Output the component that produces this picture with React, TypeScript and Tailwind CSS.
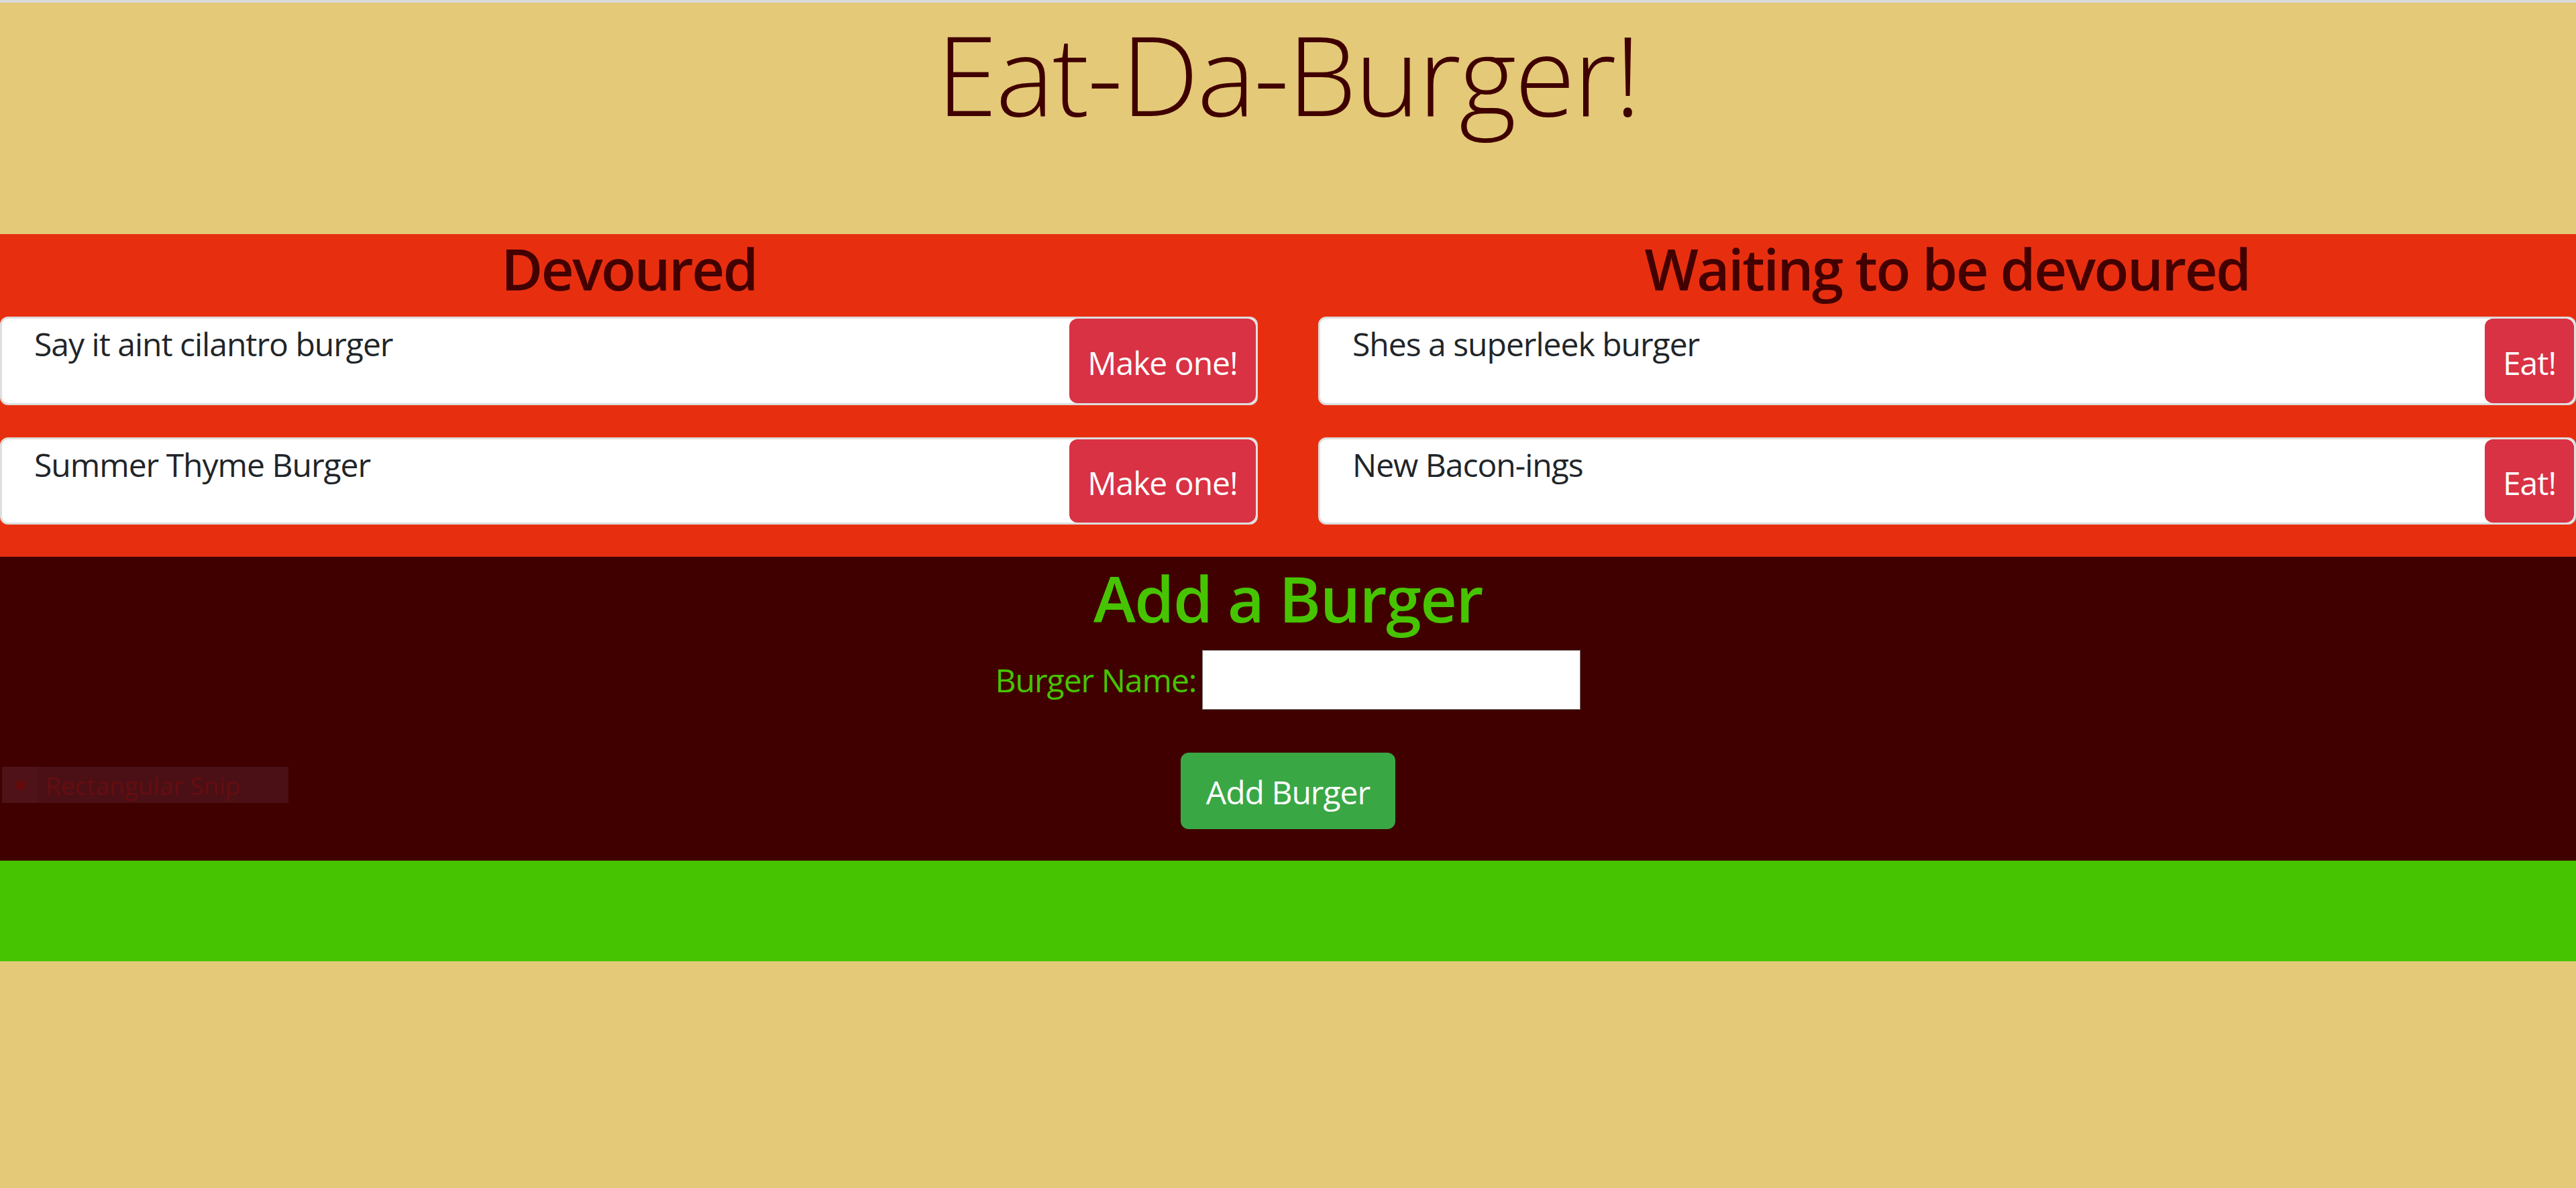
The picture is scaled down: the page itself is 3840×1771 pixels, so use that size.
import { useState } from "react"

interface Burger {
    id: number
    name: string
}

const devoured: Burger[] = [
    { id: 1, name: "Say it aint cilantro burger" },
    { id: 2, name: "Summer Thyme Burger" },
]

const waiting: Burger[] = [
    { id: 3, name: "Shes a superleek burger" },
    { id: 4, name: "New Bacon-ings" },
]

const BurgerCard = ({ name, label, btnWidth }: { name: string, label: string, btnWidth: string }) => (
    <div className="flex h-[132px] overflow-hidden rounded-[12px] border-[3px] border-[#dedede] bg-white last:h-[130px]">
        <p className="flex-1 pl-[48px] pt-[2px] text-[48px] leading-[1.5] tracking-[-1px] text-[#212529]">{name}</p>
        <button className={`${btnWidth} h-full cursor-pointer rounded-[12px] bg-[#d93244] pt-[5px] text-[48px] leading-[1.5] tracking-[-1px] text-white`}>
            {label}
        </button>
    </div>
)

export default function App() {
    const [newName, setNewName] = useState("")

    return (
        <div className="min-h-screen border-t-4 border-[#dadada] bg-[#e3c978] font-['Open_Sans',sans-serif]">
            <header className="h-[345px] pt-[8px] text-center">
                <h1 className="text-[164px] font-light leading-[1.2] tracking-[-2.5px] text-[#400000]">Eat-Da-Burger!</h1>
            </header>

            <section className="grid grid-cols-2 gap-x-[90px] bg-[#e72f10] pb-[48px]">
                <div className="flex flex-col">
                    <h2 className="text-center text-[85px] font-semibold leading-[1.2] tracking-[-2.5px] text-[#420000]">Devoured</h2>
                    <div className="mt-[21px] flex flex-col gap-[48px]">
                        {devoured.map((b) => (
                            <BurgerCard key={b.id} name={b.name} label="Make one!" btnWidth="w-[278px]" />
                        ))}
                    </div>
                </div>
                <div className="flex flex-col">
                    <h2 className="text-center text-[85px] font-semibold leading-[1.2] tracking-[-2.5px] text-[#420000]">Waiting to be devoured</h2>
                    <div className="mt-[21px] flex flex-col gap-[48px]">
                        {waiting.map((b) => (
                            <BurgerCard key={b.id} name={b.name} label="Eat!" btnWidth="w-[133px]" />
                        ))}
                    </div>
                </div>
            </section>

            <section className="relative flex h-[453px] flex-col items-center bg-[#400000] pt-[4px]">
                <h2 className="text-[95px] font-semibold leading-[1.2] tracking-[-1.5px] text-[#46c401]">Add a Burger</h2>
                <form className="flex flex-col items-center" onSubmit={(e) => e.preventDefault()}>
                    <div className="mt-[21px] flex items-center gap-[9px]">
                        <label htmlFor="burger" className="text-[48px] leading-[1.5] tracking-[-1px] text-[#46c401]">Burger Name:</label>
                        <input
                            id="burger"
                            value={newName}
                            onChange={(e) => setNewName(e.target.value)}
                            className="h-[89px] w-[564px] border border-[#767676] bg-white px-[6px] text-[40px] outline-none"
                        />
                    </div>
                    <button className="mt-[64px] h-[114px] w-[320px] cursor-pointer rounded-[12px] bg-[#3aa745] pt-[4px] text-[48px] leading-[1.5] tracking-[-1px] text-white">
                        Add Burger
                    </button>
                </form>

                {/* snipping tool leftover */}
                <div className="absolute left-[3px] top-[313px] flex h-[54px] w-[427px] items-center bg-[#4a1015]">
                    <div className="flex h-full w-[54px] items-center justify-center bg-[#4f1218]">
                        <span className="h-[15px] w-[15px] rounded-full bg-[#640a0c]" />
                    </div>
                    <span className="pl-[11px] text-[37px] leading-none text-[#650d10]">Rectangular Snip</span>
                </div>
            </section>

            <div className="h-[150px] bg-[#46c401]" />
        </div>
    )
}
